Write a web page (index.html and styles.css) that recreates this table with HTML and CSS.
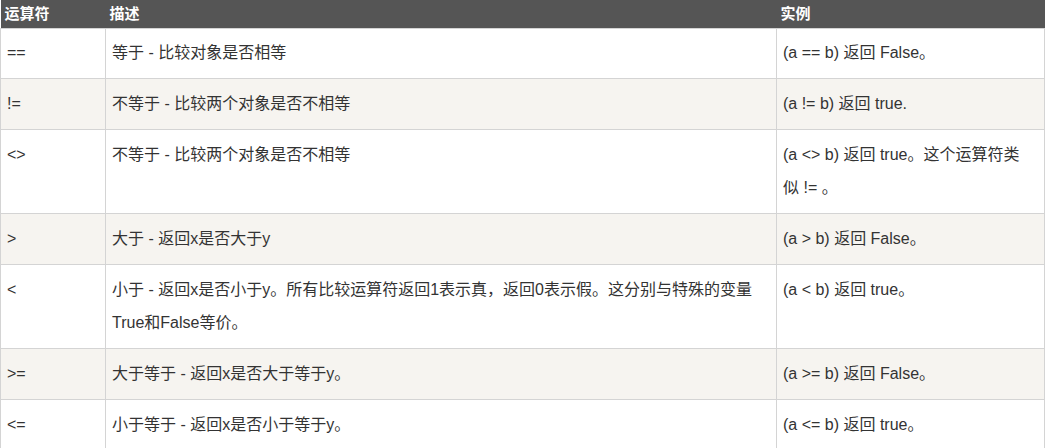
FILE: index.html
```html
<!DOCTYPE html>
<html lang="zh-CN">
<head>
<meta charset="utf-8">
<title>比较运算符</title>
<link rel="stylesheet" href="styles.css">
</head>
<body>
<table class="reference">
  <colgroup>
    <col class="c-op">
    <col class="c-desc">
    <col class="c-ex">
  </colgroup>
  <thead>
    <tr>
      <th>运算符</th>
      <th>描述</th>
      <th>实例</th>
    </tr>
  </thead>
  <tbody>
    <tr>
      <td>==</td>
      <td>等于 - 比较对象是否相等</td>
      <td>(a == b) 返回 False。</td>
    </tr>
    <tr class="alt">
      <td>!=</td>
      <td>不等于 - 比较两个对象是否不相等</td>
      <td>(a != b) 返回 true.</td>
    </tr>
    <tr>
      <td>&lt;&gt;</td>
      <td>不等于 - 比较两个对象是否不相等</td>
      <td>(a &lt;&gt; b) 返回 true。这个运算符类似 != 。</td>
    </tr>
    <tr class="alt">
      <td>&gt;</td>
      <td>大于 - 返回x是否大于y</td>
      <td>(a &gt; b) 返回 False。</td>
    </tr>
    <tr>
      <td>&lt;</td>
      <td>小于 - 返回x是否小于y。所有比较运算符返回1表示真，返回0表示假。这分别与特殊的变量True和False等价。</td>
      <td>(a &lt; b) 返回 true。</td>
    </tr>
    <tr class="alt">
      <td>&gt;=</td>
      <td>大于等于 - 返回x是否大于等于y。</td>
      <td>(a &gt;= b) 返回 False。</td>
    </tr>
    <tr>
      <td>&lt;=</td>
      <td>小于等于 - 返回x是否小于等于y。</td>
      <td>(a &lt;= b) 返回 true。</td>
    </tr>
  </tbody>
</table>
</body>
</html>
```

FILE: styles.css
```css
html, body {
  margin: 0;
  padding: 0;
  background: #ffffff;
}

body {
  font-family: "Liberation Sans", "Noto Sans CJK SC", sans-serif;
  color: #333333;
}

.reference {
  width: 1044px;
  table-layout: fixed;
  border-collapse: collapse;
  border-spacing: 0;
}

.c-op { width: 105px; }
.c-desc { width: 671px; }
.c-ex { width: 268px; }

.reference th {
  background: #555555;
  color: #ffffff;
  font-size: 15px;
  font-weight: bold;
  text-align: left;
  height: 28px;
  line-height: 28px;
  padding: 0 4px;
  border: none;
}

.reference td {
  font-size: 16px;
  line-height: 33px;
  padding: 8px 12px 9px 6px;
  border: 1px solid #d4d4d4;
  vertical-align: top;
}

.reference tbody tr:first-child td {
  padding-top: 7px;
}

.reference tr.alt td {
  background: #f6f4f0;
}
```
